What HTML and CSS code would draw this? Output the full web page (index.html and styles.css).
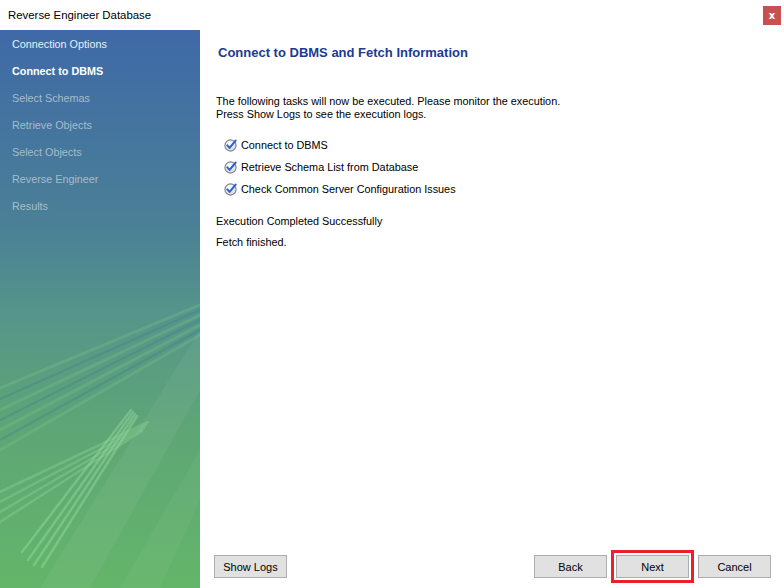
FILE: index.html
```html
<!DOCTYPE html>
<html>
<head>
<meta charset="utf-8">
<link rel="stylesheet" href="styles.css">
</head>
<body>
<div class="window">
  <div class="titlebar">
    <span class="title">Reverse Engineer Database</span>
    <span class="close">x</span>
  </div>
  <div class="content">
    <div class="sidebar">
      <svg class="streaks" width="200" height="558" viewBox="0 0 200 558">
        <g stroke-linecap="round">
          <polygon points="200,300 200,360 90,558 40,558" fill="rgba(255,255,255,0.05)"/>
          <polygon points="200,420 200,470 160,558 120,558" fill="rgba(255,255,255,0.04)"/>
          <g stroke="rgba(120,200,140,0.3)" stroke-width="3">
            <line x1="200" y1="275" x2="0" y2="358"/>
            <line x1="200" y1="285" x2="0" y2="380"/>
            <line x1="200" y1="295" x2="0" y2="400"/>
            <line x1="200" y1="305" x2="0" y2="420"/>
          </g>
          <g stroke="rgba(60,120,150,0.3)" stroke-width="2">
            <line x1="200" y1="280" x2="0" y2="369"/>
            <line x1="200" y1="290" x2="0" y2="390"/>
            <line x1="200" y1="300" x2="0" y2="410"/>
          </g>
          <g stroke="rgba(140,210,150,0.4)" stroke-width="2.5">
            <line x1="148" y1="392" x2="0" y2="462"/>
            <line x1="146" y1="395" x2="0" y2="472"/>
            <line x1="144" y1="398" x2="0" y2="482"/>
            <line x1="142" y1="401" x2="0" y2="492"/>
          </g>
          <g stroke="rgba(150,220,160,0.45)" stroke-width="2.5">
            <line x1="131" y1="380" x2="22" y2="522"/>
            <line x1="133" y1="382" x2="28" y2="530"/>
            <line x1="135" y1="384" x2="34" y2="535"/>
            <line x1="137" y1="386" x2="42" y2="537"/>
          </g>
        </g>
      </svg>
      <div class="step done">Connection Options</div>
      <div class="step current">Connect to DBMS</div>
      <div class="step">Select Schemas</div>
      <div class="step">Retrieve Objects</div>
      <div class="step">Select Objects</div>
      <div class="step">Reverse Engineer</div>
      <div class="step">Results</div>
    </div>
    <div class="pane">
      <h1 class="heading">Connect to DBMS and Fetch Information</h1>
      <p class="intro">The following tasks will now be executed. Please monitor the execution.<br>Press Show Logs to see the execution logs.</p>
      <ul class="tasks">
        <li class="task"><svg class="check" width="13" height="13" viewBox="0 0 13 13"><defs><radialGradient id="g" cx="0.4" cy="0.35" r="0.7"><stop offset="0" stop-color="#ffffff"/><stop offset="1" stop-color="#d4d8dc"/></radialGradient></defs><circle cx="6.5" cy="6.5" r="5.6" fill="url(#g)" stroke="#7d8389" stroke-width="1.1"/><path d="M3.3 6.4 L5.6 8.9 L11.6 1.6" fill="none" stroke="#2b5fcf" stroke-width="2" stroke-linecap="round" stroke-linejoin="round"/></svg>Connect to DBMS</li>
        <li class="task"><svg class="check" width="13" height="13" viewBox="0 0 13 13"><circle cx="6.5" cy="6.5" r="5.6" fill="url(#g)" stroke="#7d8389" stroke-width="1.1"/><path d="M3.3 6.4 L5.6 8.9 L11.6 1.6" fill="none" stroke="#2b5fcf" stroke-width="2" stroke-linecap="round" stroke-linejoin="round"/></svg>Retrieve Schema List from Database</li>
        <li class="task"><svg class="check" width="13" height="13" viewBox="0 0 13 13"><circle cx="6.5" cy="6.5" r="5.6" fill="url(#g)" stroke="#7d8389" stroke-width="1.1"/><path d="M3.3 6.4 L5.6 8.9 L11.6 1.6" fill="none" stroke="#2b5fcf" stroke-width="2" stroke-linecap="round" stroke-linejoin="round"/></svg>Check Common Server Configuration Issues</li>
      </ul>
      <div class="status">Execution Completed Successfully</div>
      <div class="status">Fetch finished.</div>
      <div class="footer">
        <button class="btn">Show Logs</button>
        <div class="spacer"></div>
        <button class="btn">Back</button>
        <button class="btn highlighted">Next</button>
        <button class="btn">Cancel</button>
      </div>
    </div>
  </div>
</div>
</body>
</html>
```

FILE: styles.css
```css
html, body {
  margin: 0;
  padding: 0;
  background: #ffffff;
}
.window {
  width: 784px;
  height: 588px;
  display: flex;
  flex-direction: column;
  font-family: "Liberation Sans", Arial, sans-serif;
  font-size: 10.85px;
  color: #000;
  overflow: hidden;
}
.titlebar {
  height: 30px;
  display: flex;
  align-items: center;
  justify-content: space-between;
  padding: 0 2px 0 8px;
  background: #ffffff;
  flex: none;
}
.title {
  font-size: 11.4px;
  color: #000;
}
.close {
  width: 18px;
  height: 19px;
  margin-right: 1px;
  background: #c75050;
  color: #fff;
  font-weight: bold;
  font-size: 10px;
  display: flex;
  align-items: center;
  justify-content: center;
  font-family: "DejaVu Sans", sans-serif;
}
.content {
  flex: 1;
  display: flex;
}
.sidebar {
  width: 200px;
  flex: none;
  position: relative;
  padding-top: 1px;
  background: linear-gradient(180deg, #3f69a7 0%, #4a8096 35%, #55948a 50%, #5ea676 72%, #64b56a 100%);
}
.streaks {
  position: absolute;
  left: 0;
  top: 0;
}
.step {
  position: relative;
  height: 27px;
  line-height: 27px;
  padding-left: 12px;
  color: #a7bccb;
  font-size: 10.8px;
}
.step.done {
  color: #e8f0f8;
}
.step.current {
  color: #ffffff;
  font-weight: bold;
}
.pane {
  flex: 1;
  display: flex;
  flex-direction: column;
  padding: 0 13px 0 16px;
}
.heading {
  margin: 15px 0 0 2px;
  font-size: 13px;
  line-height: 16px;
  font-weight: bold;
  color: #1c3a94;
}
.intro {
  margin: 34px 0 0 0;
  line-height: 13px;
}
.tasks {
  list-style: none;
  margin: 13px 0 0 0;
  padding: 0 0 0 8px;
}
.task {
  height: 22px;
  display: flex;
  align-items: center;
}
.check {
  margin-right: 4px;
  flex: none;
}
.status {
  line-height: 21px;
}
.tasks + .status {
  margin-top: 11px;
}
.footer {
  margin-top: auto;
  margin-left: -2px;
  padding-bottom: 10px;
  display: flex;
  align-items: center;
}
.spacer {
  flex: 1;
}
.btn {
  width: 73px;
  height: 23px;
  margin-left: 9px;
  background: #e1e1e1;
  border: 1px solid #adadad;
  font-family: "Liberation Sans", Arial, sans-serif;
  font-size: 11px;
  color: #000;
  padding: 0;
}
.btn:first-child {
  margin-left: 0;
}
.highlighted {
  outline: 3px solid #e8212b;
  outline-offset: 2px;
}
```
